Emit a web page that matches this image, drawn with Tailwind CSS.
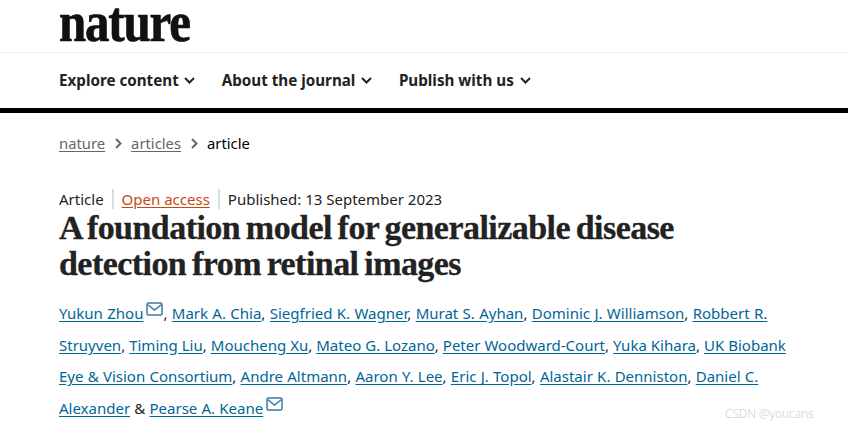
<!DOCTYPE html>
<html><head><meta charset="utf-8"><script src="https://cdn.jsdelivr.net/npm/@tailwindcss/browser@4"></script></head>
<body class="bg-white h-[428px] overflow-hidden font-['Noto_Sans',sans-serif] text-[#222] relative">
<header class="h-[53px] border-b border-[#eee] pl-[59px] pt-[7.3px]">
<div class="font-['Liberation_Serif',serif] font-bold text-[49px] leading-[36px] tracking-[-1.2px] text-[#111] h-[36px] w-fit origin-bottom-left scale-y-[1.18] [-webkit-text-stroke:0.6px_#111]">nature</div>
</header>
<nav class="h-[55px] pl-[59px] flex items-center gap-[26.5px] border-b-[5px] border-black box-content text-[15.2px] font-bold text-[#222]">
<span class="flex items-center gap-[5.5px]">Explore content <svg width="11" height="7" viewBox="0 0 11 7" fill="none" stroke="#222" stroke-width="2"><path d="M1 1l4.500 4.500L10 1"/></svg></span>
<span class="flex items-center gap-[6px]">About the journal <svg width="11" height="7" viewBox="0 0 11 7" fill="none" stroke="#222" stroke-width="2"><path d="M1 1l4.500 4.500L10 1"/></svg></span>
<span class="flex items-center gap-[6px]">Publish with us <svg width="11" height="7" viewBox="0 0 11 7" fill="none" stroke="#222" stroke-width="2"><path d="M1 1l4.500 4.500L10 1"/></svg></span>
</nav>
<div class="pl-[59px] mt-[18px] flex items-center h-[24px] text-[14.8px] text-[#666]">
<span class="underline underline-offset-2">nature</span>
<svg class="mx-[9.5px]" width="7" height="11" viewBox="0 0 7 11" fill="none" stroke="#666" stroke-width="2"><path d="M1 1l4.500 4.500L1 10"/></svg>
<span class="underline underline-offset-2">articles</span>
<svg class="mx-[9.5px]" width="7" height="11" viewBox="0 0 7 11" fill="none" stroke="#666" stroke-width="2"><path d="M1 1l4.500 4.500L1 10"/></svg>
<span class="text-black">article</span>
</div>
<main class="pl-[59px] mt-[33px]">
<div class="flex items-center h-[22px] text-[15px]">
<span>Article</span><span class="w-[2px] h-[20px] bg-[#d5dee5] mx-[8px]"></span>
<span class="text-[#c64a10] underline underline-offset-2">Open access</span><span class="w-[2px] h-[20px] bg-[#d5dee5] mx-[8px]"></span>
<span>Published: 13 September 2023</span>
</div>
<h1 class="font-['Liberation_Serif',serif] font-bold text-[34px] leading-[36px] tracking-[-0.55px] [word-spacing:-2.2px] [-webkit-text-stroke:0.3px_#222] text-[#222] mt-0 w-[700px]">A foundation model for generalizable disease detection from retinal images</h1>
<div class="mt-[16px] w-[760px] text-[15px] leading-[31.7px] text-[#222]">
<div class="whitespace-nowrap [word-spacing:0.45px]"><a class="text-[#069] underline underline-offset-2">Yukun Zhou</a><svg class="inline align-[3px] ml-[3px]" width="17" height="14" viewBox="0 0 17 14" fill="none" stroke="#3a7ba5" stroke-width="1.5"><rect x="1" y="1" width="15" height="12" rx="1.5"/><path d="M1.500 2.500l7 5.500 7-5.500"/></svg>, <a class="text-[#069] underline underline-offset-2">Mark A. Chia</a>, <a class="text-[#069] underline underline-offset-2">Siegfried K. Wagner</a>, <a class="text-[#069] underline underline-offset-2">Murat S. Ayhan</a>, <a class="text-[#069] underline underline-offset-2">Dominic J. Williamson</a>, <a class="text-[#069] underline underline-offset-2">Robbert R.</a></div>
<div class="whitespace-nowrap [word-spacing:0.1px]"><a class="text-[#069] underline underline-offset-2">Struyven</a>, <a class="text-[#069] underline underline-offset-2">Timing Liu</a>, <a class="text-[#069] underline underline-offset-2">Moucheng Xu</a>, <a class="text-[#069] underline underline-offset-2">Mateo G. Lozano</a>, <a class="text-[#069] underline underline-offset-2">Peter Woodward-Court</a>, <a class="text-[#069] underline underline-offset-2">Yuka Kihara</a>, <a class="text-[#069] underline underline-offset-2">UK Biobank</a></div>
<div class="whitespace-nowrap [word-spacing:0.35px]"><a class="text-[#069] underline underline-offset-2">Eye &amp; Vision Consortium</a>, <a class="text-[#069] underline underline-offset-2">Andre Altmann</a>, <a class="text-[#069] underline underline-offset-2">Aaron Y. Lee</a>, <a class="text-[#069] underline underline-offset-2">Eric J. Topol</a>, <a class="text-[#069] underline underline-offset-2">Alastair K. Denniston</a>, <a class="text-[#069] underline underline-offset-2">Daniel C.</a></div>
<div class="whitespace-nowrap [word-spacing:0.3px]"><a class="text-[#069] underline underline-offset-2">Alexander</a> &amp; <a class="text-[#069] underline underline-offset-2">Pearse A. Keane</a><svg class="inline align-[3px] ml-[3px]" width="17" height="14" viewBox="0 0 17 14" fill="none" stroke="#3a7ba5" stroke-width="1.5"><rect x="1" y="1" width="15" height="12" rx="1.5"/><path d="M1.500 2.500l7 5.500 7-5.500"/></svg></div>
</div>
</main>
<div class="absolute left-[725px] top-[406px] text-[12px] leading-[16px] font-light text-[#cfcfcf] whitespace-nowrap tracking-[-0.1px]">CSDN @youcans</div>
</body></html>
